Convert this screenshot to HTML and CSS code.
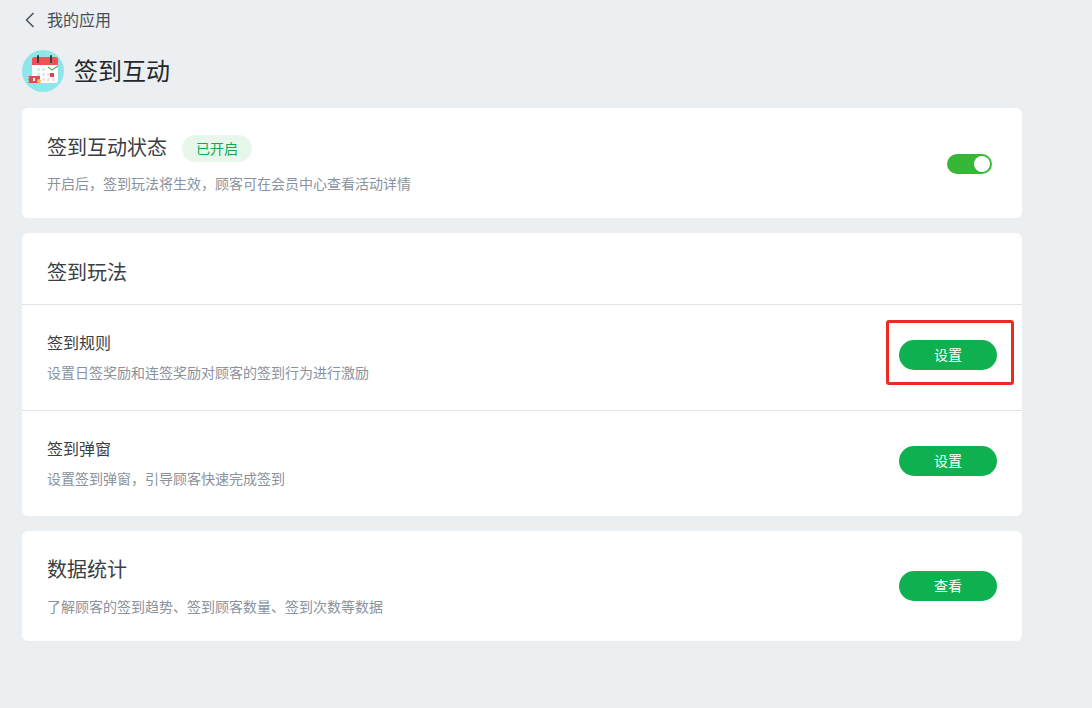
FILE: index.html
```html
<!DOCTYPE html>
<html lang="zh-CN">
<head>
<meta charset="utf-8">
<title>签到互动</title>
<link rel="stylesheet" href="styles.css">
</head>
<body>
<div class="page">
  <nav class="back">
    <svg class="back-icon" width="10" height="16" viewBox="0 0 10 16"><path d="M8.500 1 L1.500 8 L8.500 15" fill="none" stroke="#4a4f57" stroke-width="1.500"/></svg>
    <span>我的应用</span>
  </nav>
  <header class="head">
    <svg class="logo" width="42" height="42" viewBox="0 0 42 42">
      <circle cx="21" cy="21" r="21" fill="#8fe6ea"/>
      <rect x="10" y="7" width="26" height="26" rx="2" fill="#fff"/>
      <path d="M10 15V9a2 2 0 0 1 2-2h22a2 2 0 0 1 2 2v6z" fill="#ee5253"/>
      <rect x="15" y="5" width="2" height="8" rx="1" fill="#3b3f46"/>
      <rect x="28" y="5" width="2" height="8" rx="1" fill="#3b3f46"/>
      <g fill="#e4e6ea">
        <rect x="15" y="18" width="3" height="3"/><rect x="20" y="18" width="3" height="3"/>
        <rect x="15" y="23" width="3" height="3"/><rect x="20" y="23" width="3" height="3"/>
        <rect x="25" y="23" width="3" height="3"/><rect x="20" y="28" width="3" height="3"/>
        <rect x="25" y="28" width="3" height="3"/><rect x="30" y="28" width="3" height="3"/>
      </g>
      <rect x="28" y="23" width="4" height="4" fill="#e0404a"/>
      <path d="M26 17l4 3 6-4" fill="none" stroke="#5fae5a" stroke-width="1.300"/>
      <path d="M6 26h12v7H6a2 2 0 0 0 0-3.500 2 2 0 0 0 0-3.500z" fill="#e9484d"/>
      <rect x="11" y="28" width="2" height="3" fill="#fff"/>
      <circle cx="17" cy="31" r="2" fill="#f7c04a"/>
    </svg>
    <h1 class="page-title">签到互动</h1>
  </header>

  <section class="card card-row">
    <div class="info info-status">
      <div class="title-line">
        <h2 class="title">签到互动状态</h2>
        <span class="badge">已开启</span>
      </div>
      <p class="desc">开启后，签到玩法将生效，顾客可在会员中心查看活动详情</p>
    </div>
    <div class="toggle"><span class="knob"></span></div>
  </section>

  <section class="card">
    <h2 class="title group-head">签到玩法</h2>
    <div class="row">
      <div class="info">
        <h3 class="row-title">签到规则</h3>
        <p class="desc">设置日签奖励和连签奖励对顾客的签到行为进行激励</p>
      </div>
      <div class="btn-wrap">
        <button class="btn">设置</button>
        <span class="mark"></span>
      </div>
    </div>
    <div class="row">
      <div class="info">
        <h3 class="row-title">签到弹窗</h3>
        <p class="desc">设置签到弹窗，引导顾客快速完成签到</p>
      </div>
      <div class="btn-wrap">
        <button class="btn">设置</button>
      </div>
    </div>
  </section>

  <section class="card card-row">
    <div class="info">
      <h2 class="title">数据统计</h2>
      <p class="desc desc-stat">了解顾客的签到趋势、签到顾客数量、签到次数等数据</p>
    </div>
    <div class="btn-wrap">
      <button class="btn">查看</button>
    </div>
  </section>
</div>
</body>
</html>
```
FILE: styles.css
```css
* { box-sizing: border-box; }
html, body { margin: 0; padding: 0; }
body {
  background: #ebeff2;
  font-family: "Noto Sans CJK SC", "Liberation Sans", sans-serif;
  color: #33373d;
  height: 708px;
  overflow: hidden;
}
.page { width: 1000px; margin-left: 22px; }
.back {
  height: 40px;
  display: flex;
  align-items: center;
  gap: 12px;
  padding-left: 3px;
  font-size: 16px;
  line-height: 22px;
  color: #4a4f57;
}
.back span { margin-bottom: 2px; }
.back-icon { flex: none; }
.head {
  height: 60px;
  display: flex;
  align-items: center;
  gap: 10px;
  margin-top: 1px;
}
.logo { flex: none; }
.page-title {
  margin: 0 0 2px;
  font-size: 24px;
  font-weight: 400;
  line-height: 34px;
  color: #24272c;
}
.card {
  background: #fff;
  border-radius: 6px;
  margin-top: 15px;
}
.head + .card { margin-top: 7px; }
.card-row {
  height: 110px;
  display: flex;
  align-items: center;
  justify-content: space-between;
  padding: 0 25px;
}
.info-status { margin-top: 2px; }
.title-line { display: flex; align-items: flex-start; gap: 15px; }
.title {
  margin: 0;
  font-size: 20px;
  font-weight: 400;
  line-height: 24px;
  color: #3a3e44;
}
.badge {
  width: 70px;
  height: 27px;
  border-radius: 14px;
  background: #e8f7ec;
  color: #12a84f;
  font-size: 14px;
  line-height: 27px;
  text-align: center;
}
.desc {
  margin: 11px 0 0;
  font-size: 14px;
  line-height: 20px;
  color: #8a929e;
}
.desc-stat { margin-top: 15px; }
.toggle {
  width: 45px;
  height: 20px;
  margin: 2px 5px 0 0;
  border-radius: 10px;
  background: #36b737;
  padding: 2px;
  display: flex;
  justify-content: flex-end;
}
.knob {
  width: 16px;
  height: 16px;
  border-radius: 50%;
  background: #fff;
}
.group-head {
  height: 71px;
  line-height: 78px;
  padding-left: 25px;
}
.row {
  height: 106px;
  border-top: 1px solid #e1e3e6;
  padding: 0 25px;
  display: flex;
  align-items: center;
  justify-content: space-between;
}
.row .info { margin-bottom: 3px; }
.row-title {
  margin: 0;
  font-size: 16px;
  font-weight: 400;
  line-height: 24px;
  color: #3a3e44;
}
.row .desc { margin-top: 8px; }
.btn-wrap { position: relative; display: flex; }
.btn {
  width: 98px;
  height: 30px;
  border: 0;
  border-radius: 15px;
  background: #0fb04f;
  color: #fff;
  font-family: inherit;
  font-size: 14px;
  padding: 0 0 2px;
}
.row .btn-wrap { margin-bottom: 5px; }
.mark {
  position: absolute;
  left: -13px;
  top: -20px;
  width: 128px;
  height: 65px;
  border: 3px solid #f02a23;
  border-radius: 3px;
}
```
